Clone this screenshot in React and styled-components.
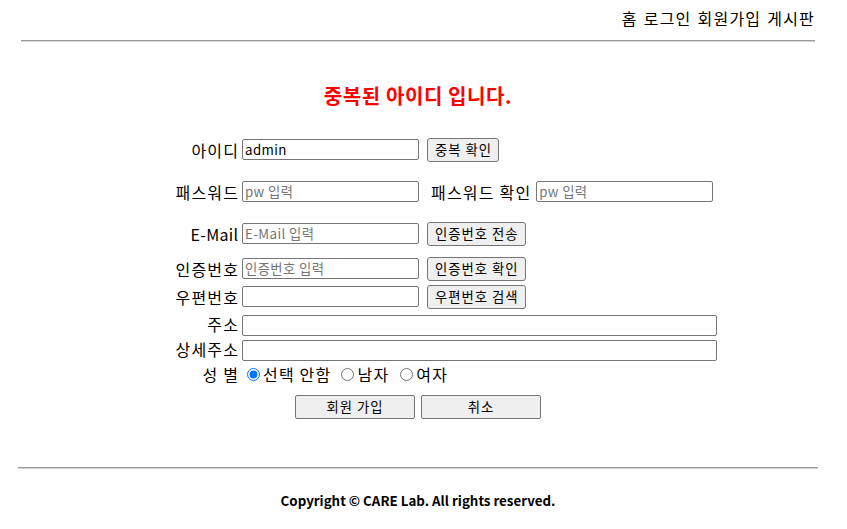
import React from "react";
import styled, { createGlobalStyle } from "styled-components";

const Global = createGlobalStyle`
  html, body { margin: 0; padding: 0; background: #fff; }
  body {
    font-family: "Noto Sans CJK KR", "Noto Sans", sans-serif;
    color: #000;
  }
  * { box-sizing: border-box; }
`;

const Page = styled.div`
  width: 836px;
`;

const Header = styled.header`
  width: 794px;
  margin-left: 21px;
`;

const Nav = styled.nav`
  display: flex;
  justify-content: flex-end;
  gap: 6px;
  padding-top: 8px;
  font-size: 16px;
  line-height: 20px;
  letter-spacing: 1.2px;
`;

const NavLink = styled.a`
  color: #000;
  text-decoration: none;
  cursor: pointer;
`;

const Rule = styled.hr`
  margin: ${(p) => p.$mt}px 0 0 ${(p) => p.$ml}px;
  width: ${(p) => p.$w}px;
  height: 0;
  border: none;
  border-top: 1px solid #9a9a9a;
  border-bottom: 1px solid #d4d4d4;
`;

const Title = styled.h3`
  margin: 42px 0 0;
  text-align: center;
  color: #ff0000;
  font-size: 20px;
  font-weight: bold;
  line-height: 24px;
  letter-spacing: 0.6px;
`;

const Form = styled.form`
  margin-top: 29.5px;
`;

const Fields = styled.div`
  padding-left: 170px;
`;

const Row = styled.div`
  display: grid;
  grid-template-columns: 68px 177px auto;
  column-gap: 4px;
  align-items: center;
  height: 24px;
  margin-top: ${(p) => p.$mt || 0}px;
`;

const Label = styled.label`
  text-align: right;
  font-size: 16px;
  line-height: 20px;
  white-space: nowrap;
  letter-spacing: ${(p) => (p.$latin ? 0.3 : 1.2)}px;
  margin-right: ${(p) => (p.$latin ? -0.3 : -1.2)}px;
`;

const TextInput = styled.input`
  width: ${(p) => p.$w || 177}px;
  height: 21px;
  padding: 1px 2px;
  border: 1px solid #767676;
  border-radius: 2px;
  font-family: "Noto Sans CJK KR", "Noto Sans", sans-serif;
  font-size: 13.33px;
  color: #000;
  background: #fff;
  outline: none;
  letter-spacing: 0.4px;
  &::placeholder { color: #757575; }
`;

const Wide = styled.div`
  grid-column: 2 / span 2;
`;

const Cell = styled.div`
  display: flex;
  align-items: center;
  gap: 6px;
  padding-left: 8px;
`;

const SmallButton = styled.button`
  justify-self: start;
  margin-left: 4px;
  height: 24px;
  padding: 0 6px 0 7px;
  border: 1px solid #767676;
  border-radius: 3px;
  background: #efefef;
  font-family: "Noto Sans CJK KR", "Noto Sans", sans-serif;
  font-size: 13.33px;
  letter-spacing: 1px;
  color: #000;
  line-height: 20px;
  white-space: nowrap;
`;

const Radios = styled.div`
  grid-column: 2 / span 2;
  display: flex;
  align-items: center;
  font-size: 16px;
  line-height: 20px;
  letter-spacing: 1.2px;
  white-space: nowrap;
`;

const Radio = styled.input`
  width: 13px;
  height: 13px;
  margin: 0 3px 0 ${(p) => p.$ml}px;
`;

const Actions = styled.div`
  display: flex;
  justify-content: center;
  gap: 6px;
  margin-top: 9px;
`;

const BigButton = styled.button`
  width: 120px;
  height: 24px;
  padding: 0;
  border: 1px solid #767676;
  border-radius: 2px;
  background: #efefef;
  font-family: "Noto Sans CJK KR", "Noto Sans", sans-serif;
  font-size: 13.33px;
  letter-spacing: 1px;
  color: #000;
  line-height: 20px;
`;

const Footer = styled.footer`
  margin-top: 22px;
  text-align: center;
  font-size: 13.33px;
  font-weight: bold;
  line-height: 20px;
`;

export default function App() {
  return (
    <Page>
      <Global />
      <Header>
        <Nav>
          <NavLink>홈</NavLink>
          <NavLink>로그인</NavLink>
          <NavLink>회원가입</NavLink>
          <NavLink>게시판</NavLink>
        </Nav>
      </Header>
      <Rule $mt={12} $ml={21} $w={794} />
      <Title>중복된 아이디 입니다.</Title>
      <Form onSubmit={(e) => e.preventDefault()}>
        <Fields>
          <Row>
            <Label>아이디</Label>
            <TextInput defaultValue="admin" />
            <SmallButton type="button">중복 확인</SmallButton>
          </Row>
          <Row $mt={18}>
            <Label>패스워드</Label>
            <TextInput type="password" placeholder="pw 입력" />
            <Cell>
              <Label>패스워드 확인</Label>
              <TextInput type="password" placeholder="pw 입력" />
            </Cell>
          </Row>
          <Row $mt={18}>
            <Label $latin>E-Mail</Label>
            <TextInput placeholder="E-Mail 입력" />
            <SmallButton type="button">인증번호 전송</SmallButton>
          </Row>
          <Row $mt={11}>
            <Label>인증번호</Label>
            <TextInput placeholder="인증번호 입력" />
            <SmallButton type="button">인증번호 확인</SmallButton>
          </Row>
          <Row $mt={4}>
            <Label>우편번호</Label>
            <TextInput />
            <SmallButton type="button">우편번호 검색</SmallButton>
          </Row>
          <Row $mt={3}>
            <Label>주소</Label>
            <Wide>
              <TextInput $w={475} />
            </Wide>
          </Row>
          <Row $mt={1}>
            <Label>상세주소</Label>
            <Wide>
              <TextInput $w={475} />
            </Wide>
          </Row>
          <Row $mt={1.5}>
            <Label>성 별</Label>
            <Radios>
              <Radio type="radio" name="gender" defaultChecked $ml={5} />
              선택 안함
              <Radio type="radio" name="gender" $ml={10} />
              남자
              <Radio type="radio" name="gender" $ml={11} />
              여자
            </Radios>
          </Row>
        </Fields>
        <Actions>
          <BigButton type="submit">회원 가입</BigButton>
          <BigButton type="button">취소</BigButton>
        </Actions>
      </Form>
      <Rule $mt={48} $ml={18} $w={800} />
      <Footer>Copyright © CARE Lab. All rights reserved.</Footer>
    </Page>
  );
}
